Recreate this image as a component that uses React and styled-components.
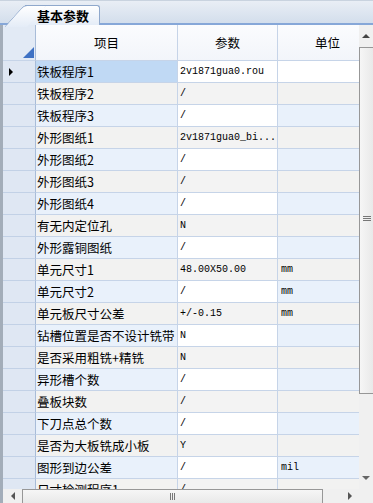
import React from "react";
import styled, { createGlobalStyle } from "styled-components";

const GlobalStyle = createGlobalStyle`
    html, body {
        margin: 0;
        padding: 0;
        background: #ffffff;
        overflow: hidden;
    }
    * {
        box-sizing: border-box;
    }
`;

const rows = [
    ["铁板程序1", "2v1871gua0.rou", ""],
    ["铁板程序2", "/", ""],
    ["铁板程序3", "/", ""],
    ["外形图纸1", "2v1871gua0_bi...", ""],
    ["外形图纸2", "/", ""],
    ["外形图纸3", "/", ""],
    ["外形图纸4", "/", ""],
    ["有无内定位孔", "N", ""],
    ["外形露铜图纸", "/", ""],
    ["单元尺寸1", "48.00X50.00", "mm"],
    ["单元尺寸2", "/", "mm"],
    ["单元板尺寸公差", "+/-0.15", "mm"],
    ["钻槽位置是否不设计铣带", "N", ""],
    ["是否采用粗铣+精铣", "N", ""],
    ["异形槽个数", "/", ""],
    ["叠板块数", "/", ""],
    ["下刀点总个数", "/", ""],
    ["是否为大板铣成小板", "Y", ""],
    ["图形到边公差", "/", "mil"],
    ["尺寸检测程序1", "/", ""],
];

const App = () => {
    return (
        <>
            <GlobalStyle />
            <Frame>
                <TabStrip>
                    <Tab>基本参数</Tab>
                </TabStrip>
                <Main>
                    <Viewport>
                        <HeaderRow>
                            <Corner>
                                <CornerMark />
                            </Corner>
                            <HeadCell>项目</HeadCell>
                            <HeadCell>参数</HeadCell>
                            <HeadCell>单位</HeadCell>
                        </HeaderRow>
                        {rows.map(([name, value, unit], i) => (
                            <Row key={name}>
                                <RowHead>{i === 0 && <Marker />}</RowHead>
                                <NameCell $alt={i % 2 === 1} $selected={i === 0}>{name}</NameCell>
                                <ValueCell $alt={i % 2 === 1}>{value}</ValueCell>
                                <UnitCell $alt={i % 2 === 1} $first={i === 0}>{unit}</UnitCell>
                            </Row>
                        ))}
                    </Viewport>
                    <VScroll>
                        <ArrowBox><Arrow $dir="up" /></ArrowBox>
                        <VThumb><VGrip /></VThumb>
                        <VTrack />
                        <ArrowBox><Arrow $dir="down" /></ArrowBox>
                    </VScroll>
                    <HScroll>
                        <HArrowBox><Arrow $dir="left" /></HArrowBox>
                        <HThumb><HGrip /></HThumb>
                        <HTrack />
                        <HArrowBox><Arrow $dir="right" /></HArrowBox>
                    </HScroll>
                    <ScrollCorner />
                </Main>
            </Frame>
        </>
    );
};

export default App;

const Frame = styled.div`
    width: 373px;
    height: 503px;
    display: flex;
    flex-direction: column;
    font-family: "Noto Sans CJK SC", "Liberation Sans", sans-serif;
    color: #000;
    overflow: hidden;
`;

const TabStrip = styled.div`
    height: 25px;
    flex: none;
    display: flex;
    align-items: flex-end;
    padding-left: 5px;
    background: linear-gradient(#e9eef5, #d3deec);
    border-top: 1px solid #c9d3df;
    border-bottom: 2px solid #86a7d8;
`;

const Tab = styled.div`
    position: relative;
    height: 20px;
    margin-bottom: -2px;
    margin-left: 20px;
    padding: 0 10px 0 12px;
    display: flex;
    align-items: center;
    font-size: 13px;
    font-weight: bold;
    background: linear-gradient(#ffffff, #e4ecf7);
    border: 1px solid #8fa8cc;
    border-left: none;
    border-bottom: none;
    border-radius: 0 3px 0 0;
    z-index: 1;

    &::before {
        content: "";
        position: absolute;
        left: -11px;
        top: -1px;
        width: 22px;
        height: 21px;
        background: linear-gradient(#ffffff, #e4ecf7);
        border-left: 1px solid #8fa8cc;
        border-top: 1px solid #8fa8cc;
        border-radius: 4px 0 0 0;
        transform: skewX(-42deg);
        z-index: -1;
    }
`;

const Main = styled.div`
    display: grid;
    grid-template-columns: 359px 14px;
    grid-template-rows: 464px 14px;
`;

const Viewport = styled.div`
    overflow: hidden;
    border-left: 3px solid #a3adb9;
    background: #ffffff;
`;

const gridCols = `
    display: grid;
    grid-template-columns: 33px 142px 100px 100px;
`;

const HeaderRow = styled.div`
    ${gridCols}
    height: 36px;
    background: linear-gradient(#fbfcfe, #f2f5fa);
`;

const HeadCell = styled.div`
    display: flex;
    align-items: center;
    justify-content: center;
    font-size: 12.5px;
    border-right: 1px solid #c6d4e8;
    border-bottom: 1px solid #c6d4e8;
`;

const Corner = styled.div`
    position: relative;
    background: #e2eaf5;
    border-right: 1px solid #a8bcd8;
    border-bottom: 1px solid #c6d4e8;
`;

const CornerMark = styled.div`
    position: absolute;
    right: 1px;
    bottom: 2px;
    width: 0;
    height: 0;
    border-left: 11px solid transparent;
    border-bottom: 11px solid #3f72c4;
`;

const Row = styled.div`
    ${gridCols}
    height: 22px;
`;

const RowHead = styled.div`
    position: relative;
    background: #dfe7f3;
    border-right: 1px solid #a8bcd8;
    border-bottom: 1px solid #c2d1e6;
`;

const Marker = styled.div`
    position: absolute;
    left: 6px;
    top: 7px;
    width: 0;
    height: 0;
    border-top: 4px solid transparent;
    border-bottom: 4px solid transparent;
    border-left: 4px solid #000;
`;

const Cell = styled.div`
    display: flex;
    align-items: center;
    white-space: nowrap;
    overflow: hidden;
    border-right: 1px solid #c6d4e8;
    border-bottom: 1px solid #c6d4e8;
`;

const NameCell = styled(Cell)`
    padding-left: 1px;
    font-size: 12.5px;
    background: ${(p) => (p.$selected ? "#c0d9f4" : p.$alt ? "#f2f2f1" : "#e9f1fb")};
`;

const ValueCell = styled(Cell)`
    padding-left: 2px;
    font-family: "Liberation Mono", "DejaVu Sans Mono", monospace;
    font-size: 10px;
    background: ${(p) => (p.$alt ? "#f3f3f3" : "#ffffff")};
`;

const UnitCell = styled(Cell)`
    padding-left: 3px;
    font-family: "Liberation Mono", "DejaVu Sans Mono", monospace;
    font-size: 10px;
    background: ${(p) => (p.$first ? "#ffffff" : p.$alt ? "#f2f2f1" : "#e9f1fb")};
`;

const VScroll = styled.div`
    display: flex;
    flex-direction: column;
    background: #f0f0f0;
`;

const ArrowBox = styled.div`
    height: 22px;
    flex: none;
    display: flex;
    align-items: center;
    justify-content: center;
`;

const Arrow = styled.div`
    width: 0;
    height: 0;
    ${(p) =>
        p.$dir === "up"
            ? "border-left: 4px solid transparent; border-right: 4px solid transparent; border-bottom: 4px solid #444;"
            : p.$dir === "down"
            ? "border-left: 4px solid transparent; border-right: 4px solid transparent; border-top: 4px solid #666;"
            : p.$dir === "left"
            ? "border-top: 4px solid transparent; border-bottom: 4px solid transparent; border-right: 4px solid #555;"
            : "border-top: 4px solid transparent; border-bottom: 4px solid transparent; border-left: 4px solid #555;"}
`;

const VThumb = styled.div`
    height: 347px;
    flex: none;
    display: flex;
    align-items: center;
    justify-content: center;
    background: linear-gradient(90deg, #f6f6f6, #e9e9e9);
    border: 1px solid #979797;
    border-right: none;
    padding-bottom: 4px;
`;

const VGrip = styled.div`
    width: 8px;
    height: 5px;
    border-top: 1px solid #777;
    border-bottom: 1px solid #777;
    position: relative;

    &::after {
        content: "";
        position: absolute;
        left: 0;
        right: 0;
        top: 1px;
        border-top: 1px solid #777;
    }
`;

const VTrack = styled.div`
    flex: 1;
`;

const HScroll = styled.div`
    display: flex;
    background: #f0f0f0;
    border-left: 3px solid #a3adb9;
`;

const HArrowBox = styled.div`
    width: 19px;
    flex: none;
    display: flex;
    align-items: center;
    justify-content: center;
`;

const HThumb = styled.div`
    width: 301px;
    flex: none;
    display: flex;
    align-items: center;
    justify-content: center;
    background: linear-gradient(#f6f6f6, #e9e9e9);
    border: 1px solid #979797;
    border-bottom: none;
`;

const HGrip = styled.div`
    width: 5px;
    height: 7px;
    border-left: 1px solid #777;
    border-right: 1px solid #777;
    position: relative;

    &::after {
        content: "";
        position: absolute;
        top: 0;
        bottom: 0;
        left: 1px;
        border-left: 1px solid #777;
    }
`;

const HTrack = styled.div`
    flex: 1;
`;

const ScrollCorner = styled.div`
    background: #f0f0f0;
`;
